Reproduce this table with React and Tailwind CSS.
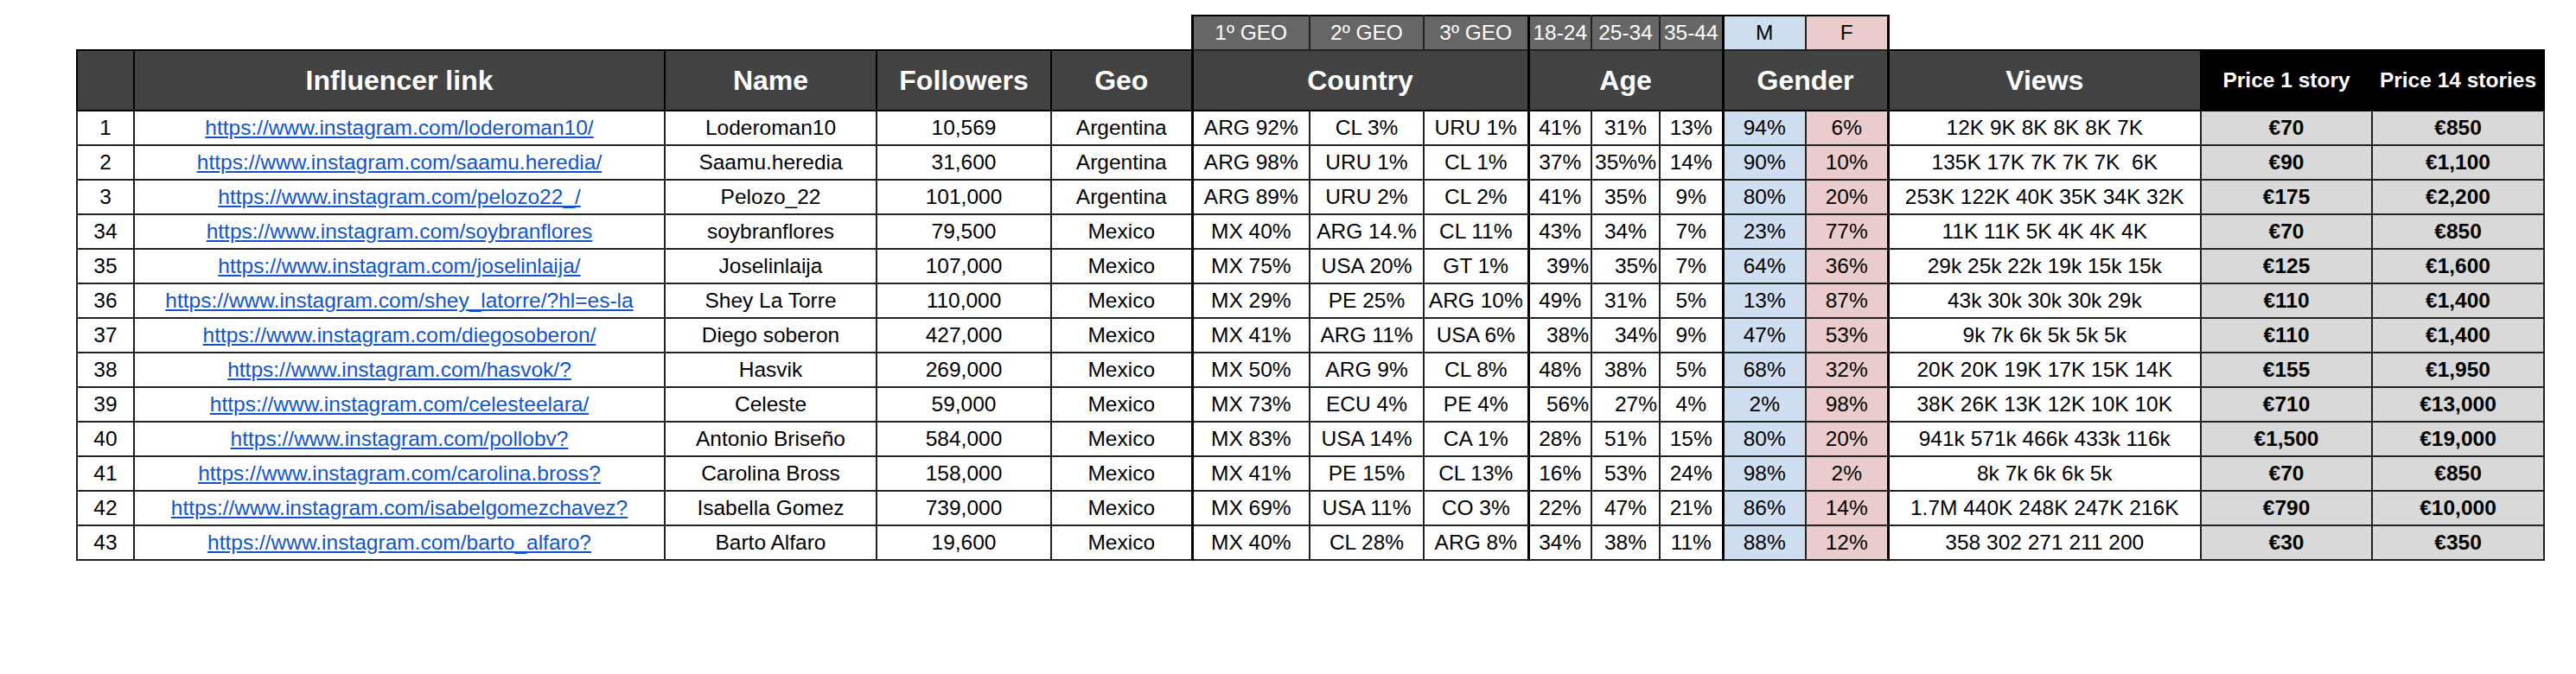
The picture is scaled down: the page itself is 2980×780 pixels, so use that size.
import React from "react";

const cols = [66, 614, 245, 202, 163, 136, 132, 121, 73, 79, 73, 96, 95, 362, 198, 199];
const colClasses = [
  "w-[66px]", "w-[614px]", "w-[245px]", "w-[202px]", "w-[163px]", "w-[136px]", "w-[132px]", "w-[121px]",
  "w-[73px]", "w-[79px]", "w-[73px]", "w-[96px]", "w-[95px]", "w-[362px]", "w-[198px]", "w-[199px]",
];

// r = right aligned age cells flags [18-24, 25-34]
const rows = [
  ["1", "https://www.instagram.com/loderoman10/", "Loderoman10", "10,569", "Argentina", "ARG 92%", "CL 3%", "URU 1%", "41%", "31%", "13%", "94%", "6%", "12K 9K 8K 8K 8K 7K", "€70", "€850", false],
  ["2", "https://www.instagram.com/saamu.heredia/", "Saamu.heredia", "31,600", "Argentina", "ARG 98%", "URU 1%", "CL 1%", "37%", "35%%", "14%", "90%", "10%", "135K 17K 7K 7K 7K  6K", "€90", "€1,100", false],
  ["3", "https://www.instagram.com/pelozo22_/", "Pelozo_22", "101,000", "Argentina", "ARG 89%", "URU 2%", "CL 2%", "41%", "35%", "9%", "80%", "20%", "253K 122K 40K 35K 34K 32K", "€175", "€2,200", false],
  ["34", "https://www.instagram.com/soybranflores", "soybranflores", "79,500", "Mexico", "MX 40%", "ARG 14.%", "CL 11%", "43%", "34%", "7%", "23%", "77%", "11K 11K 5K 4K 4K 4K", "€70", "€850", false],
  ["35", "https://www.instagram.com/joselinlaija/", "Joselinlaija", "107,000", "Mexico", "MX 75%", "USA 20%", "GT 1%", "39%", "35%", "7%", "64%", "36%", "29k 25k 22k 19k 15k 15k", "€125", "€1,600", true],
  ["36", "https://www.instagram.com/shey_latorre/?hl=es-la", "Shey La Torre", "110,000", "Mexico", "MX 29%", "PE 25%", "ARG 10%", "49%", "31%", "5%", "13%", "87%", "43k 30k 30k 30k 29k", "€110", "€1,400", false],
  ["37", "https://www.instagram.com/diegosoberon/", "Diego soberon", "427,000", "Mexico", "MX 41%", "ARG 11%", "USA 6%", "38%", "34%", "9%", "47%", "53%", "9k 7k 6k 5k 5k 5k", "€110", "€1,400", true],
  ["38", "https://www.instagram.com/hasvok/?", "Hasvik", "269,000", "Mexico", "MX 50%", "ARG 9%", "CL 8%", "48%", "38%", "5%", "68%", "32%", "20K 20K 19K 17K 15K 14K", "€155", "€1,950", false],
  ["39", "https://www.instagram.com/celesteelara/", "Celeste", "59,000", "Mexico", "MX 73%", "ECU 4%", "PE 4%", "56%", "27%", "4%", "2%", "98%", "38K 26K 13K 12K 10K 10K", "€710", "€13,000", true],
  ["40", "https://www.instagram.com/pollobv?", "Antonio Briseño", "584,000", "Mexico", "MX 83%", "USA 14%", "CA 1%", "28%", "51%", "15%", "80%", "20%", "941k 571k 466k 433k 116k", "€1,500", "€19,000", false],
  ["41", "https://www.instagram.com/carolina.bross?", "Carolina Bross", "158,000", "Mexico", "MX 41%", "PE 15%", "CL 13%", "16%", "53%", "24%", "98%", "2%", "8k 7k 6k 6k 5k", "€70", "€850", false],
  ["42", "https://www.instagram.com/isabelgomezchavez?", "Isabella Gomez", "739,000", "Mexico", "MX 69%", "USA 11%", "CO 3%", "22%", "47%", "21%", "86%", "14%", "1.7M 440K 248K 247K 216K", "€790", "€10,000", false],
  ["43", "https://www.instagram.com/barto_alfaro?", "Barto Alfaro", "19,600", "Mexico", "MX 40%", "CL 28%", "ARG 8%", "34%", "38%", "11%", "88%", "12%", "358 302 271 211 200", "€30", "€350", false],
];

const base = "border-2 border-[#222222] p-0 text-center align-middle whitespace-pre overflow-hidden";
const thickL = "border-l-[3px] border-l-black";

function cellClass(i, rightAlign) {
  let c = base + " h-[40px]";
  if (i === 5 || i === 8 || i === 11) c += " " + thickL;
  if (i === 13) c += " " + thickL;
  if (i === 11) c += " bg-[#d0def1]";
  else if (i === 12) c += " bg-[#ebcccc]";
  else if (i === 14 || i === 15) c += " bg-[#d9d9d9] font-bold";
  else c += " bg-white";
  if (rightAlign && (i === 8 || i === 9)) c += " text-right pr-[2px]";
  return c;
}

export default function App() {
  return (
    <div className="w-[2980px] h-[780px] bg-white pt-[17px] pl-[88px] font-['Liberation_Sans',Arial,sans-serif] text-black">
      <table className="table-fixed border-collapse w-[2855px] text-[24.5px] leading-none">
        <colgroup>
          {colClasses.map((c, i) => (
            <col key={i} className={c} />
          ))}
        </colgroup>
        <tbody>
          <tr className="h-[40px]">
            <td colSpan={5} className="border-0 p-0" />
            <td className={`${base} ${thickL} border-t-black bg-[#666666] text-white`}>1º GEO</td>
            <td className={`${base} border-t-black bg-[#666666] text-white`}>2º GEO</td>
            <td className={`${base} border-t-black bg-[#666666] text-white`}>3º GEO</td>
            <td className={`${base} ${thickL} border-t-black bg-[#666666] text-white`}>18-24</td>
            <td className={`${base} border-t-black bg-[#666666] text-white`}>25-34</td>
            <td className={`${base} border-t-black bg-[#666666] text-white`}>35-44</td>
            <td className={`${base} ${thickL} border-t-black bg-[#d0def1]`}>M</td>
            <td className={`${base} border-t-black border-r-[3px] border-r-black bg-[#ebcccc]`}>F</td>
            <td colSpan={3} className="border-0 p-0" />
          </tr>
          <tr className="h-[70px]">
            <td className={`${base} border-black bg-[#434343]`} />
            <td className={`${base} border-black bg-[#434343] text-white font-bold text-[32px]`}>Influencer link</td>
            <td className={`${base} border-black bg-[#434343] text-white font-bold text-[32px]`}>Name</td>
            <td className={`${base} border-black bg-[#434343] text-white font-bold text-[32px]`}>Followers</td>
            <td className={`${base} border-black bg-[#434343] text-white font-bold text-[32px]`}>Geo</td>
            <td colSpan={3} className={`${base} border-black ${thickL} bg-[#434343] text-white font-bold text-[32px]`}>Country</td>
            <td colSpan={3} className={`${base} border-black ${thickL} bg-[#434343] text-white font-bold text-[32px]`}>Age</td>
            <td colSpan={2} className={`${base} border-black ${thickL} bg-[#434343] text-white font-bold text-[32px]`}>Gender</td>
            <td className={`${base} border-black ${thickL} bg-[#434343] text-white font-bold text-[32px]`}>Views</td>
            <td className={`${base} border-black bg-black text-white font-bold`}>Price 1 story</td>
            <td className={`${base} border-black bg-black text-white font-bold`}>Price 14 stories</td>
          </tr>
          {rows.map((r, ri) => {
            const ra = r[16];
            return (
              <tr key={ri} className="h-[40px]">
                {r.slice(0, 16).map((v, i) => (
                  <td key={i} className={cellClass(i, ra)}>
                    {i === 1 ? (
                      <a href="#" className="text-[#1155cc] underline">{v}</a>
                    ) : (
                      v
                    )}
                  </td>
                ))}
              </tr>
            );
          })}
        </tbody>
      </table>
    </div>
  );
}
